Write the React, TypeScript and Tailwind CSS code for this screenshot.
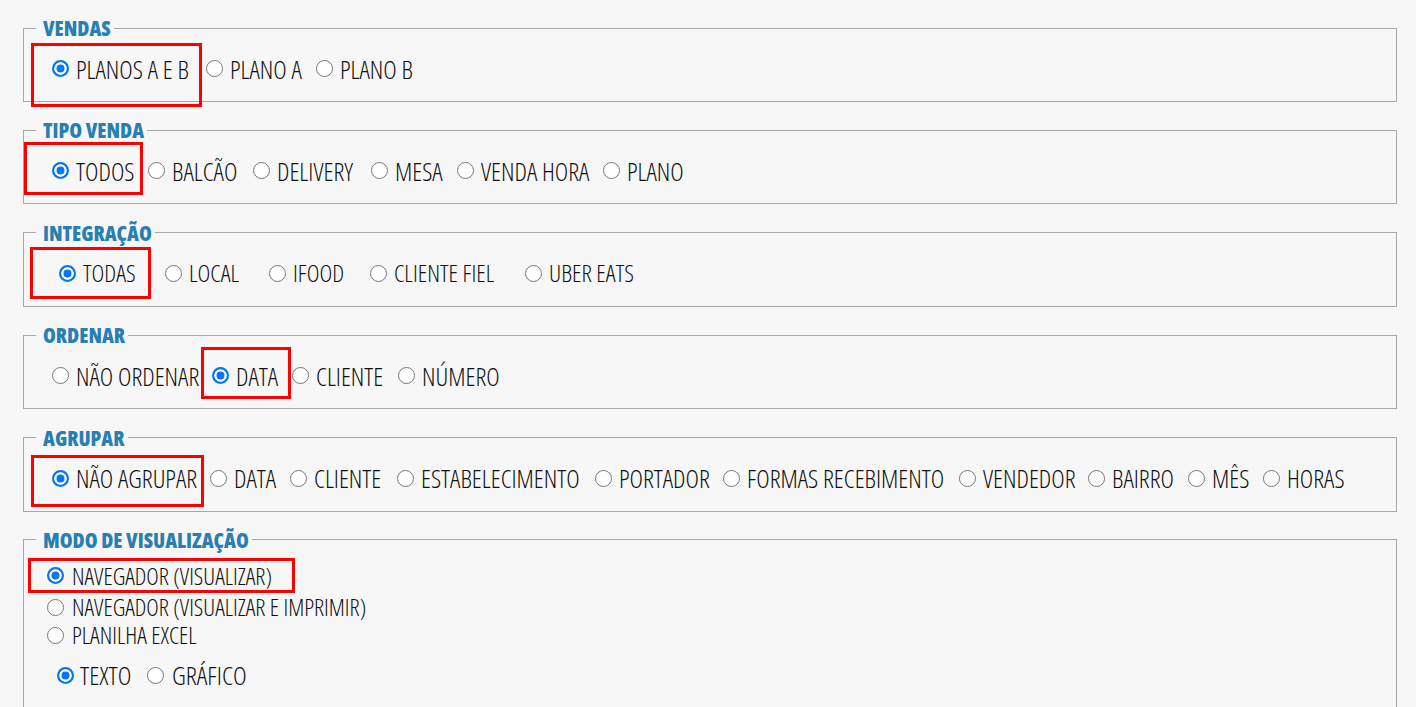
import React from 'react';

interface Option {
  label: string;
  w?: number; // distancia ate a proxima opcao
  checked?: boolean;
}

interface Group {
  title: string;
  name: string;
  pl: string;
  text: string;
  options: Option[];
}

const groups: Group[] = [
  {
    title: 'VENDAS',
    name: 'vendas',
    pl: 'pl-[16px]',
    text: 'text-[25.5px]',
    options: [
      { label: 'PLANOS A E B', w: 154, checked: true },
      { label: 'PLANO A', w: 110 },
      { label: 'PLANO B' },
    ],
  },
  {
    title: 'TIPO VENDA',
    name: 'tipo',
    pl: 'pl-[16px]',
    text: 'text-[25.5px]',
    options: [
      { label: 'TODOS', w: 96, checked: true },
      { label: 'BALCÃO', w: 105 },
      { label: 'DELIVERY', w: 118 },
      { label: 'MESA', w: 86 },
      { label: 'VENDA HORA', w: 146 },
      { label: 'PLANO' },
    ],
  },
  {
    title: 'INTEGRAÇÃO',
    name: 'integracao',
    pl: 'pl-[23px]',
    text: 'text-[24.3px]',
    options: [
      { label: 'TODAS', w: 106, checked: true },
      { label: 'LOCAL', w: 104 },
      { label: 'IFOOD', w: 101 },
      { label: 'CLIENTE FIEL', w: 155 },
      { label: 'UBER EATS' },
    ],
  },
  {
    title: 'ORDENAR',
    name: 'ordenar',
    pl: 'pl-[16px]',
    text: 'text-[25.5px]',
    options: [
      { label: 'NÃO ORDENAR', w: 160 },
      { label: 'DATA', w: 80, checked: true },
      { label: 'CLIENTE', w: 106 },
      { label: 'NÚMERO' },
    ],
  },
  {
    title: 'AGRUPAR',
    name: 'agrupar',
    pl: 'pl-[16px]',
    text: 'text-[25.5px]',
    options: [
      { label: 'NÃO AGRUPAR', w: 158, checked: true },
      { label: 'DATA', w: 80 },
      { label: 'CLIENTE', w: 107 },
      { label: 'ESTABELECIMENTO', w: 198 },
      { label: 'PORTADOR', w: 128 },
      { label: 'FORMAS RECEBIMENTO', w: 236 },
      { label: 'VENDEDOR', w: 129 },
      { label: 'BAIRRO', w: 100 },
      { label: 'MÊS', w: 75 },
      { label: 'HORAS' },
    ],
  },
];

// caixas vermelhas de destaque (anotacao por cima da tela)
const marks = [
  'left-[31px] top-[43px] w-[171px] h-[64px]',
  'left-[24px] top-[142px] w-[119px] h-[53px]',
  'left-[30px] top-[247px] w-[121px] h-[52px]',
  'left-[201px] top-[347px] w-[90px] h-[52px]',
  'left-[31px] top-[455px] w-[173px] h-[52px]',
  'left-[28px] top-[558px] w-[267px] h-[35px]',
];

const font = "font-['Open_Sans',sans-serif] [font-stretch:condensed]";

function Radio({ name, checked }: { name: string; checked?: boolean }) {
  return (
    <input
      type="radio"
      name={name}
      defaultChecked={checked}
      className="m-0 w-[17px] h-[17px] shrink-0 appearance-none rounded-full border-[1.5px] border-[#767676] bg-white checked:border-2 checked:border-[#0075ff] checked:bg-[#0075ff] checked:shadow-[inset_0_0_0_2.5px_#fff]"
    />
  );
}

function Box({ title, children }: { title: string; children: React.ReactNode }) {
  return (
    <fieldset className="ml-[23px] mr-[19px] mb-[16.4px] border border-[#a8a8a8] pl-[12px]">
      <legend className="pl-[7px] pr-[3px] text-[20.7px] leading-[24px] font-extrabold text-[#2a7fb2]">
        {title}
      </legend>
      {children}
    </fieldset>
  );
}

export default function App() {
  return (
    <div className={`relative min-h-screen bg-[#f7f7f7] pt-[16px] text-[#111] font-[360] ${font}`}>
      {groups.map((g) => (
        <Box key={g.name} title={g.title}>
          <div className={`pt-[13.5px] pb-[17.5px] ${g.pl}`}>
            <div className={`flex items-center h-[30px] leading-[30px] ${g.text}`}>
              {g.options.map((o) => (
                <label
                  key={o.label}
                  className="flex items-center shrink-0 whitespace-nowrap"
                  style={o.w ? { width: o.w } : undefined}
                >
                  <Radio name={g.name} checked={o.checked} />
                  <span className="ml-[7px]">{o.label}</span>
                </label>
              ))}
            </div>
          </div>
        </Box>
      ))}

      <Box title="MODO DE VISUALIZAÇÃO">
        <div className="pt-[9px] pb-[40px]">
          <div className="pl-[11px] text-[23.7px] leading-[28px]">
            <label className="flex items-center h-[30px] whitespace-nowrap">
              <Radio name="modo" checked />
              <span className="ml-[8px]">NAVEGADOR (VISUALIZAR)</span>
            </label>
            <label className="flex items-center h-[28px] mt-[2.5px] whitespace-nowrap">
              <Radio name="modo" />
              <span className="ml-[8px]">NAVEGADOR (VISUALIZAR E IMPRIMIR)</span>
            </label>
            <label className="flex items-center h-[28px] whitespace-nowrap">
              <Radio name="modo" />
              <span className="ml-[8px]">PLANILHA EXCEL</span>
            </label>
          </div>
          <div className="flex items-center h-[30px] mt-[11px] pl-[21px] text-[26px] leading-[30px]">
            <label className="flex items-center w-[90px] shrink-0 whitespace-nowrap">
              <Radio name="tipo-saida" checked />
              <span className="ml-[6px]">TEXTO</span>
            </label>
            <label className="flex items-center whitespace-nowrap">
              <Radio name="tipo-saida" />
              <span className="ml-[8px]">GRÁFICO</span>
            </label>
          </div>
        </div>
      </Box>

      {marks.map((m) => (
        <div key={m} className={`absolute ${m} border-[3px] border-[#ff0000] pointer-events-none`} />
      ))}
    </div>
  );
}
